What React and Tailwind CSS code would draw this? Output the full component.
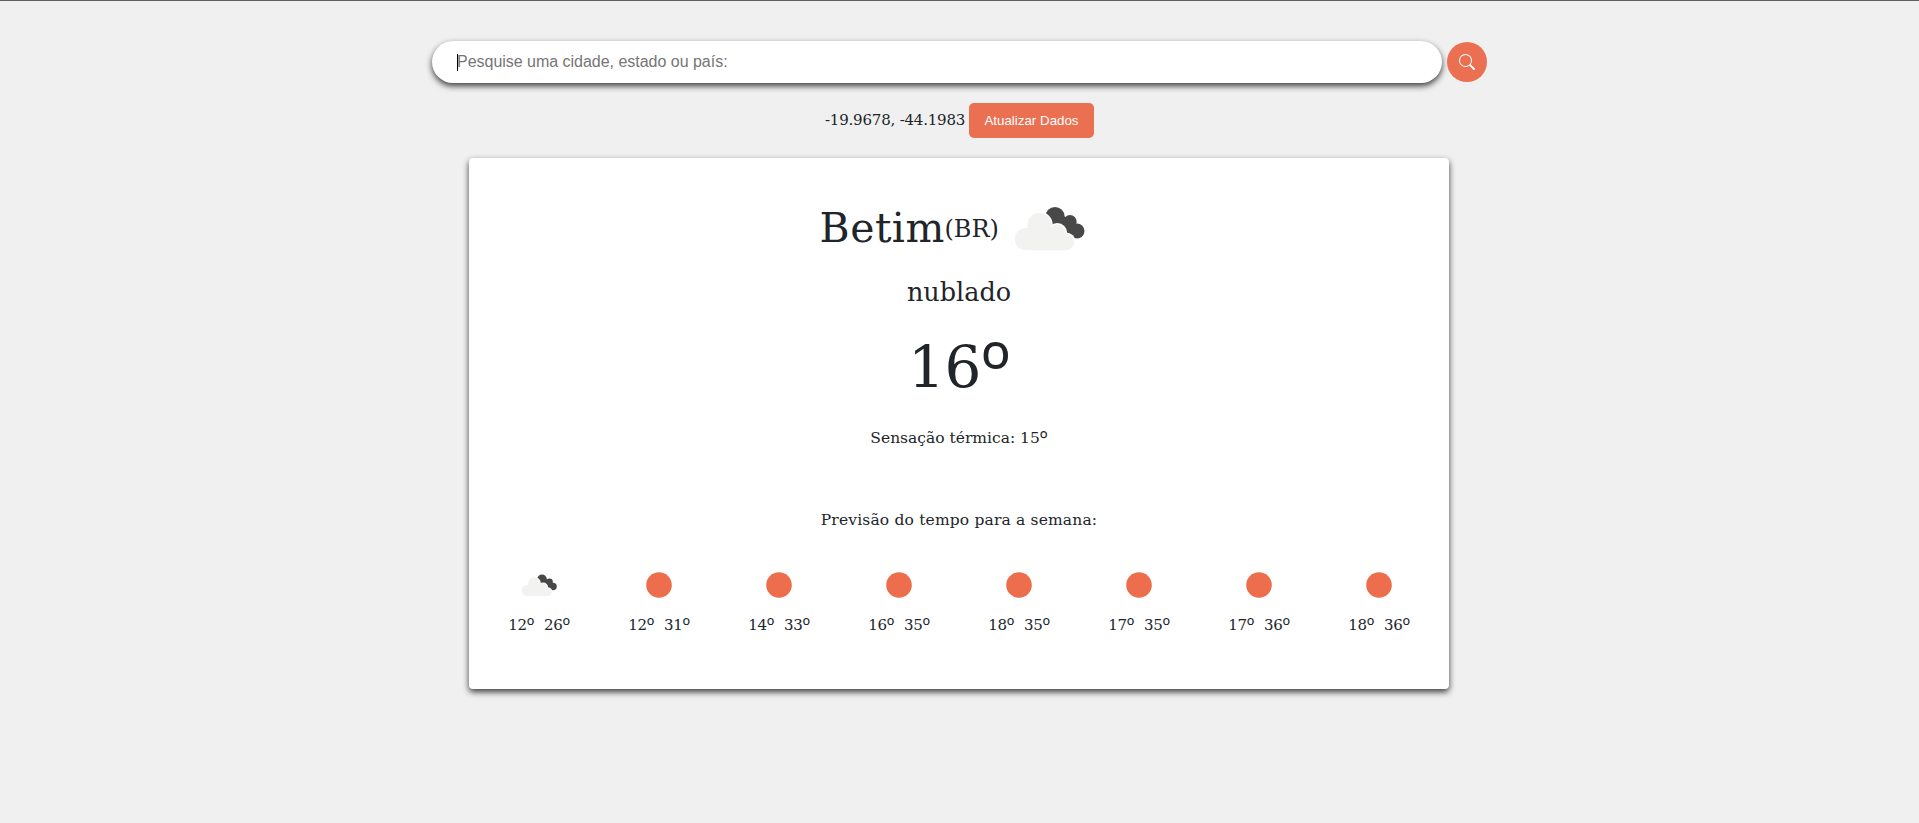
import React from 'react';

const days = [
  ['12', '26', 'cloud'],
  ['12', '31', 'sun'],
  ['14', '33', 'sun'],
  ['16', '35', 'sun'],
  ['18', '35', 'sun'],
  ['17', '35', 'sun'],
  ['17', '36', 'sun'],
  ['18', '36', 'sun'],
];

function Degree() {
  return <span className="align-[-0.15em] font-['Open_Sans',sans-serif] text-[1.36em] leading-none">º</span>;
}

function CloudIcon({ className }) {
  const puffs = [
    [26.7, 61, 11],
    [40.3, 47, 12],
    [58.3, 55, 8.5],
    [67, 64, 8.2],
  ];
  return (
    <svg viewBox="0 0 100 100" className={className}>
      <g fill="#484849">
        <circle cx="56" cy="38.700" r="9.700" />
        <circle cx="71" cy="43.700" r="6.700" />
        <circle cx="78" cy="53" r="7.500" />
        <path d="M50 44 L60 36 L74 43 L79 52 L76 60 L64 56 Z" />
      </g>
      <g fill="#ffffff">
        {puffs.map(([x, y, r]) => (
          <circle key={x} cx={x} cy={y} r={r + 1.4} />
        ))}
      </g>
      <g fill="#f2f2f1">
        {puffs.map(([x, y, r]) => (
          <circle key={x} cx={x} cy={y} r={r} />
        ))}
        <path d="M26.700 52 H60 L67 60 V72.200 H26.700 Z" />
      </g>
    </svg>
  );
}

function SunIcon() {
  return (
    <svg viewBox="0 0 50 50" className="h-[50px] w-[50px]">
      <circle cx="25" cy="25" r="12.800" fill="#ec6e4c" />
    </svg>
  );
}

function SearchIcon() {
  return (
    <svg viewBox="0 0 16 16" className="h-4 w-4" fill="#fff">
      <path d="M11.742 10.344a6.500 6.500 0 1 0-1.397 1.398h-.001q.044.060.098.115l3.850 3.850a1 1 0 0 0 1.415-1.414l-3.850-3.850a1 1 0 0 0-.115-.100zM12 6.500a5.500 5.500 0 1 1-11 0 5.500 5.500 0 0 1 11 0" />
    </svg>
  );
}

export default function App() {
  return (
    <div className="flex h-[823px] flex-col items-center border-t border-[#5f5f63] bg-[#f0f0f0] font-['DejaVu_Serif',serif] text-[#212529]">
      <form className="mt-10 flex items-center gap-[5px]">
        <div className="flex h-[42px] w-[1010px] items-center rounded-full bg-white pl-[25px] shadow-[0_3px_6px_rgba(0,0,0,0.75)]">
          <span className="h-[17px] w-px bg-black" />
          <span className="-ml-px font-['Liberation_Sans',Arial,sans-serif] text-base tracking-[-0.02px] text-[#757575]">Pesquise uma cidade, estado ou país:</span>
        </div>
        <button type="button" className="flex h-10 w-10 items-center justify-center rounded-full bg-[#eb7051]">
          <SearchIcon />
        </button>
      </form>
      <div className="mt-5 flex h-[35px] items-center">
        <span className="w-[144px] whitespace-nowrap text-[15px] tracking-[-0.2px]">-19.9678, -44.1983</span>
        <button type="button" className="h-[35px] w-[125px] rounded-[5px] bg-[#eb7051] font-['Liberation_Sans',Arial,sans-serif] text-[13.333px] text-white">Atualizar Dados</button>
      </div>
      <main className="mr-px mt-5 flex h-[531px] w-[980px] flex-col items-center rounded bg-white shadow-[0_3px_6px_rgba(0,0,0,0.75)]">
        <div className="mt-5 flex h-[100px] items-center">
          <span className="w-[125px] pt-0.5 text-[41px] tracking-[0.5px]">Betim</span>
          <span className="w-[54px] pt-px text-[24px]">(BR)</span>
          <CloudIcon className="h-[100px] w-[100px]" />
        </div>
        <p className="-mt-0.5 text-[25.500px] leading-[32px]">nublado</p>
        <p className="mt-[22px] h-[74px] text-[58px] leading-[72px] tracking-[-0.5px]">16<Degree /></p>
        <p className="mt-[22px] h-6 text-[15.500px] leading-6">Sensação térmica: 15<Degree /></p>
        <p className="mt-[58px] text-[15.500px] leading-6 tracking-[0.17px]">Previsão do tempo para a semana:</p>
        <div className="mt-7 flex">
          {days.map(([min, max, icon], i) => (
            <div key={i} className="flex w-[120px] flex-col items-center">
              {icon === 'cloud' ? <CloudIcon className="h-[50px] w-[50px]" /> : <SunIcon />}
              <div className="mt-[3px] flex gap-[10px] text-[15px] leading-6 tracking-[-0.3px]">
                <span>{min}<Degree /></span>
                <span>{max}<Degree /></span>
              </div>
            </div>
          ))}
        </div>
      </main>
    </div>
  );
}
